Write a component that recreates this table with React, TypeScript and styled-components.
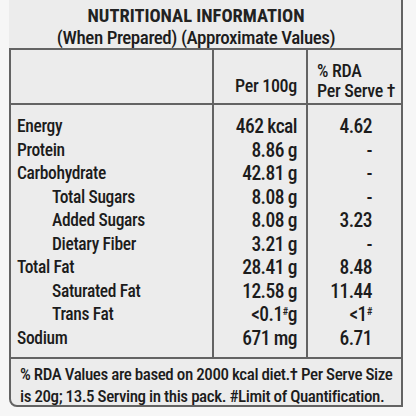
import React from "react";
import styled, { createGlobalStyle } from "styled-components";

const line = "#636363";

const Global = createGlobalStyle`
  html, body { margin: 0; padding: 0; background: #f6f6f6; }
  body { font-family: "Liberation Sans Narrow", "Roboto", sans-serif; font-stretch: condensed; color: #1c1c1c; }
`;

const Page = styled.div`
  width: 416px;
  height: 416px;
  overflow: hidden;
  background: #f6f6f6;
`;

const Sheet = styled.div`
  width: 394px;
  margin-left: 9px;
  background: #ececec;
  display: flex;
  flex-direction: column;
  border-bottom-left-radius: 8px;
`;

const Heading = styled.header`
  padding: 5px 18px 0 0;
  height: 48px;
  box-sizing: border-box;
  border-right: 2px solid ${line};
  display: flex;
  flex-direction: column;
  align-items: center;
`;

const Title = styled.h1`
  margin: 0;
  font-size: 18.5px;
  line-height: 22px;
  font-weight: 700;
  color: #222;
  white-space: nowrap;
`;

const Subtitle = styled.p`
  margin: 0;
  font-size: 19px;
  line-height: 22px;
  font-weight: 500;
  letter-spacing: -0.45px;
  white-space: nowrap;
`;

const Table = styled.div`
  border: 2px solid ${line};
  border-bottom-left-radius: 8px;
  display: grid;
  grid-template-columns: 203px 94px 1fr;
`;

const HeadCell = styled.div<{ $align: "start" | "end" | "stack" }>`
  height: 55px;
  box-sizing: border-box;
  border-bottom: 2px solid ${line};
  border-right: ${(p) => (p.$align === "stack" ? "none" : `2px solid ${line}`)};
  display: flex;
  flex-direction: column;
  justify-content: ${(p) => (p.$align === "stack" ? "flex-start" : "flex-end")};
  align-items: ${(p) => (p.$align === "end" ? "flex-end" : "flex-start")};
  padding: ${(p) => (p.$align === "stack" ? "11px 0 0 9px" : "0 9px 7px 0")};
  font-size: 18px;
  font-weight: 500;
  letter-spacing: -0.3px;
  line-height: 20px;
  white-space: nowrap;
`;

const Cell = styled.div<{ $col: 1 | 2 | 3; $indent?: boolean; $first?: boolean; $last?: boolean }>`
  height: 23.5px;
  box-sizing: content-box;
  line-height: 23.5px;
  white-space: nowrap;
  font-weight: 500;
  padding-top: ${(p) => (p.$first ? "10px" : "0")};
  padding-bottom: ${(p) => (p.$last ? "7px" : "0")};
  border-right: ${(p) => (p.$col === 3 ? "none" : `2px solid ${line}`)};
  font-size: ${(p) => (p.$col === 1 ? "17.5px" : "19.5px")};
  letter-spacing: ${(p) => (p.$col === 1 ? "-0.35px" : "-0.55px")};
  text-align: ${(p) => (p.$col === 1 ? "left" : "right")};
  padding-left: ${(p) => (p.$col === 1 ? (p.$indent ? "41px" : "6px") : "0")};
  padding-right: ${(p) => (p.$col === 2 ? "9px" : p.$col === 3 ? "29px" : "0")};
`;

const Sup = styled.sup`
  font-size: 0.55em;
  vertical-align: 0;
  position: relative;
  top: -0.55em;
`;

const Footer = styled.div`
  grid-column: 1 / -1;
  border-top: 2px solid ${line};
  padding: 4px 0 0 9px;
  height: 48px;
  box-sizing: border-box;
  font-size: 17px;
  font-weight: 500;
  letter-spacing: -0.43px;
  line-height: 22px;
  white-space: nowrap;
`;

type Row = { label: string; indent?: boolean; value: React.ReactNode; rda: React.ReactNode };

const rows: Row[] = [
  { label: "Energy", value: "462 kcal", rda: "4.62" },
  { label: "Protein", value: "8.86 g", rda: "-" },
  { label: "Carbohydrate", value: "42.81 g", rda: "-" },
  { label: "Total Sugars", indent: true, value: "8.08 g", rda: "-" },
  { label: "Added Sugars", indent: true, value: "8.08 g", rda: "3.23" },
  { label: "Dietary Fiber", indent: true, value: "3.21 g", rda: "-" },
  { label: "Total Fat", value: "28.41 g", rda: "8.48" },
  { label: "Saturated Fat", indent: true, value: "12.58 g", rda: "11.44" },
  {
    label: "Trans Fat",
    indent: true,
    value: (
      <>
        &lt;0.1<Sup>#</Sup>g
      </>
    ),
    rda: (
      <>
        &lt;1<Sup>#</Sup>
      </>
    ),
  },
  { label: "Sodium", value: "671 mg", rda: "6.71" },
];

export default function App() {
  return (
    <>
      <Global />
      <Page>
        <Sheet>
          <Heading>
            <Title>NUTRITIONAL INFORMATION</Title>
            <Subtitle>(When Prepared) (Approximate Values)</Subtitle>
          </Heading>
          <Table>
            <HeadCell $align="end" />
            <HeadCell $align="end">Per 100g</HeadCell>
            <HeadCell $align="stack">
              <span>% RDA</span>
              <span>Per Serve †</span>
            </HeadCell>
            {rows.map((r, i) => {
              const first = i === 0;
              const last = i === rows.length - 1;
              return (
                <React.Fragment key={r.label}>
                  <Cell $col={1} $indent={r.indent} $first={first} $last={last}>
                    {r.label}
                  </Cell>
                  <Cell $col={2} $first={first} $last={last}>
                    {r.value}
                  </Cell>
                  <Cell $col={3} $first={first} $last={last}>
                    {r.rda}
                  </Cell>
                </React.Fragment>
              );
            })}
            <Footer>
              % RDA Values are based on 2000 kcal diet.† Per Serve Size
              <br />
              is 20g; 13.5 Serving in this pack. #Limit of Quantification.
            </Footer>
          </Table>
        </Sheet>
      </Page>
    </>
  );
}
